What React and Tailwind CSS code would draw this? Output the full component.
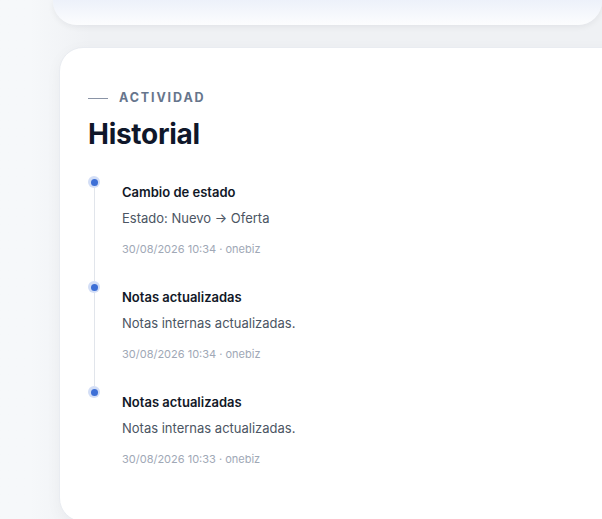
const entries = [
  { title: 'Cambio de estado', body: 'Estado: Nuevo → Oferta', meta: '30/08/2026 10:34 · onebiz' },
  { title: 'Notas actualizadas', body: 'Notas internas actualizadas.', meta: '30/08/2026 10:34 · onebiz' },
  { title: 'Notas actualizadas', body: 'Notas internas actualizadas.', meta: '30/08/2026 10:33 · onebiz' },
];

function TimelineItem({ item, last }) {
  return (
    <li className="flex">
      <div className="flex w-3 flex-col items-center">
        <span className="flex h-3 w-3 shrink-0 items-center justify-center rounded-full bg-[#d3def6]">
          <span className="h-[7px] w-[7px] rounded-full bg-[#3d6fd6]" />
        </span>
        {!last && <span className="w-px flex-1 bg-[#e1e5eb]" />}
      </div>
      <div className="ml-[22px] pt-[7px] pb-6">
        <p className="text-[13px] leading-[18px] font-semibold text-[#111827]">{item.title}</p>
        <p className="mt-[7px] text-[13px] leading-5 text-[#4b5563]">{item.body}</p>
        <p className="mt-[13px] text-[11px] leading-4 text-[#a0a8b6]">{item.meta}</p>
      </div>
    </li>
  );
}

export default function App() {
  return (
    <div
      className="h-[519px] w-[602px] overflow-hidden bg-gradient-to-r from-[#f6f8fa] from-5% to-[#eff1f4] to-15%"
      style={{ fontFamily: 'Inter, "Noto Sans", sans-serif' }}
    >
      {/* tail of the card above */}
      <div className="ml-[53px] h-[25px] rounded-b-[24px] bg-gradient-to-b from-[#edf1fa] to-[#fcfdfe] shadow-[0_2px_6px_rgba(15,23,42,0.06)]" />

      <section className="mt-[22px] ml-[59px] w-[600px] rounded-[24px] border border-[#e9ecf1] bg-white pt-[42px] pb-[30px] pl-[28px] shadow-[0_4px_16px_rgba(15,23,42,0.04)]">
        <div className="flex h-4 items-center gap-[11px]">
          <span className="h-px w-5 bg-[#8a94a6]" />
          <span className="text-[12.5px] font-bold tracking-[0.15em] text-[#66758c]">ACTIVIDAD</span>
        </div>
        <h2 className="mt-[11px] text-[28px] leading-[34px] font-bold tracking-[-0.01em] text-[#0f172a]">
          Historial
        </h2>
        <ol className="mt-[25px]">
          {entries.map((item, i) => (
            <TimelineItem key={i} item={item} last={i === entries.length - 1} />
          ))}
        </ol>
      </section>
    </div>
  );
}
